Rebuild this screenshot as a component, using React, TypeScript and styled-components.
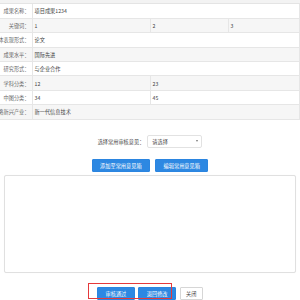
import styled, { createGlobalStyle } from "styled-components";

// ------ page data ------
const rows: { label: string; values: string[] }[] = [
  { label: "成果名称：", values: ["项目成果1234"] },
  { label: "关键词：", values: ["1", "2", "3"] },
  { label: "具体表现形式：", values: ["论文"] },
  { label: "成果水平：", values: ["国际先进"] },
  { label: "研究形式：", values: ["与企业合作"] },
  { label: "学科分类：", values: ["12", "23"] },
  { label: "中图分类：", values: ["34", "45"] },
  { label: "战略新兴产业：", values: ["新一代信息技术"] },
];

// columns after the label: 118, 78, 72
const spans = (count: number) => {
  if (count === 1) return [3];
  if (count === 2) return [1, 2];
  return [1, 1, 1];
};

function App() {
  return (
    <>
      <GlobalStyle />
      <Page>
        <TopStrip />
        <Table>
          <colgroup>
            <col style={{ width: 32 }} />
            <col style={{ width: 118 }} />
            <col style={{ width: 78 }} />
            <col />
          </colgroup>
          <tbody>
            {rows.map((row, i) => (
              <Row key={row.label} $striped={i % 2 === 1}>
                <LabelCell>
                  <LabelText>{row.label}</LabelText>
                </LabelCell>
                {row.values.map((v, j) => (
                  <ValueCell key={j} colSpan={spans(row.values.length)[j]}>
                    {v}
                  </ValueCell>
                ))}
              </Row>
            ))}
          </tbody>
        </Table>

        {/* ------ review form ------ */}
        <Form>
          <SelectRow>
            <FieldLabel>选择常用审核意见：</FieldLabel>
            <Select>
              <span>请选择</span>
              <Caret />
            </Select>
          </SelectRow>
          <ButtonRow>
            <Button>添加至常用意见箱</Button>
            <Button>编辑常用意见箱</Button>
          </ButtonRow>
          <TextArea />
          <Footer>
            <Button>审核通过</Button>
            <Button>退回修改</Button>
            <Button $plain>关闭</Button>
            <Highlight />
          </Footer>
        </Form>
      </Page>
    </>
  );
}

export default App;

// ------ component styles -------
const GlobalStyle = createGlobalStyle`
  html, body {
    margin: 0;
    padding: 0;
    background: #fff;
    overflow: hidden;
  }
  body {
    font-family: "Noto Sans CJK SC", "Noto Sans", sans-serif;
  }
`;

const Page = styled.div`
  width: 300px;
  height: 300px;
  overflow: hidden;
  font-size: 5.2px;
  color: #555;
`;

const TopStrip = styled.div`
  height: 4px;
  background: #f3f3f3;
  border-bottom: 1px solid #e4e4e4;
  box-sizing: border-box;
`;

const Table = styled.table`
  width: 300px;
  table-layout: fixed;
  border-collapse: collapse;
`;

const Row = styled.tr<{ $striped: boolean }>`
  height: 14.4px;
  background: ${(p) => (p.$striped ? "#f6f6f6" : "#fff")};
`;

const LabelCell = styled.td`
  padding: 0 2px 0 0;
  overflow: visible;
  border-bottom: 1px solid #e6e6e6;
  border-right: 1px solid #e6e6e6;
  color: #666;
  line-height: 13px;
`;

const LabelText = styled.div`
  display: flex;
  justify-content: flex-end;
  white-space: nowrap;
`;

const ValueCell = styled.td`
  padding: 0 0 0 2px;
  white-space: nowrap;
  border-bottom: 1px solid #e6e6e6;
  border-right: 1px solid #e6e6e6;
  color: #444;
  line-height: 13px;
`;

const Form = styled.div`
  padding-top: 15px;
  display: flex;
  flex-direction: column;
  align-items: center;
`;

const SelectRow = styled.div`
  display: flex;
  align-items: center;
  gap: 3px;
  height: 13px;
`;

const FieldLabel = styled.span`
  color: #444;
`;

const Select = styled.div`
  width: 55px;
  height: 13px;
  box-sizing: border-box;
  border: 1px solid #e2e2e2;
  border-radius: 2px;
  display: flex;
  align-items: center;
  justify-content: space-between;
  padding: 0 3px 0 4px;
  color: #444;
`;

const Caret = styled.span`
  width: 0;
  height: 0;
  border-left: 1.5px solid transparent;
  border-right: 1.5px solid transparent;
  border-top: 2px solid #777;
`;

const ButtonRow = styled.div`
  display: flex;
  gap: 5px;
  margin-top: 11px;
`;

const Button = styled.button<{ $plain?: boolean }>`
  font: inherit;
  height: 13px;
  padding: ${(p) => (p.$plain ? "0 5.5px" : "0 7.5px")};
  border: 1px solid ${(p) => (p.$plain ? "#d6d6d6" : "#2b85e0")};
  background: ${(p) => (p.$plain ? "#fff" : "#2d88e2")};
  color: ${(p) => (p.$plain ? "#444" : "#fff")};
  border-radius: 1px;
  line-height: 11px;
  cursor: pointer;
`;

const TextArea = styled.textarea`
  display: block;
  margin-top: 3px;
  width: 292px;
  height: 98px;
  box-sizing: border-box;
  border: 1px solid #e0e0e0;
  border-radius: 2px;
  box-shadow: 0 0 1px rgba(0, 0, 0, 0.06);
  resize: none;
  outline: none;
`;

const Footer = styled.div`
  position: relative;
  display: flex;
  gap: 3.5px;
  margin-top: 14px;
`;

const Highlight = styled.div`
  position: absolute;
  left: -9px;
  top: -4px;
  width: 84px;
  height: 16px;
  box-sizing: border-box;
  border: 1.5px solid #e5393b;
  pointer-events: none;
`;
